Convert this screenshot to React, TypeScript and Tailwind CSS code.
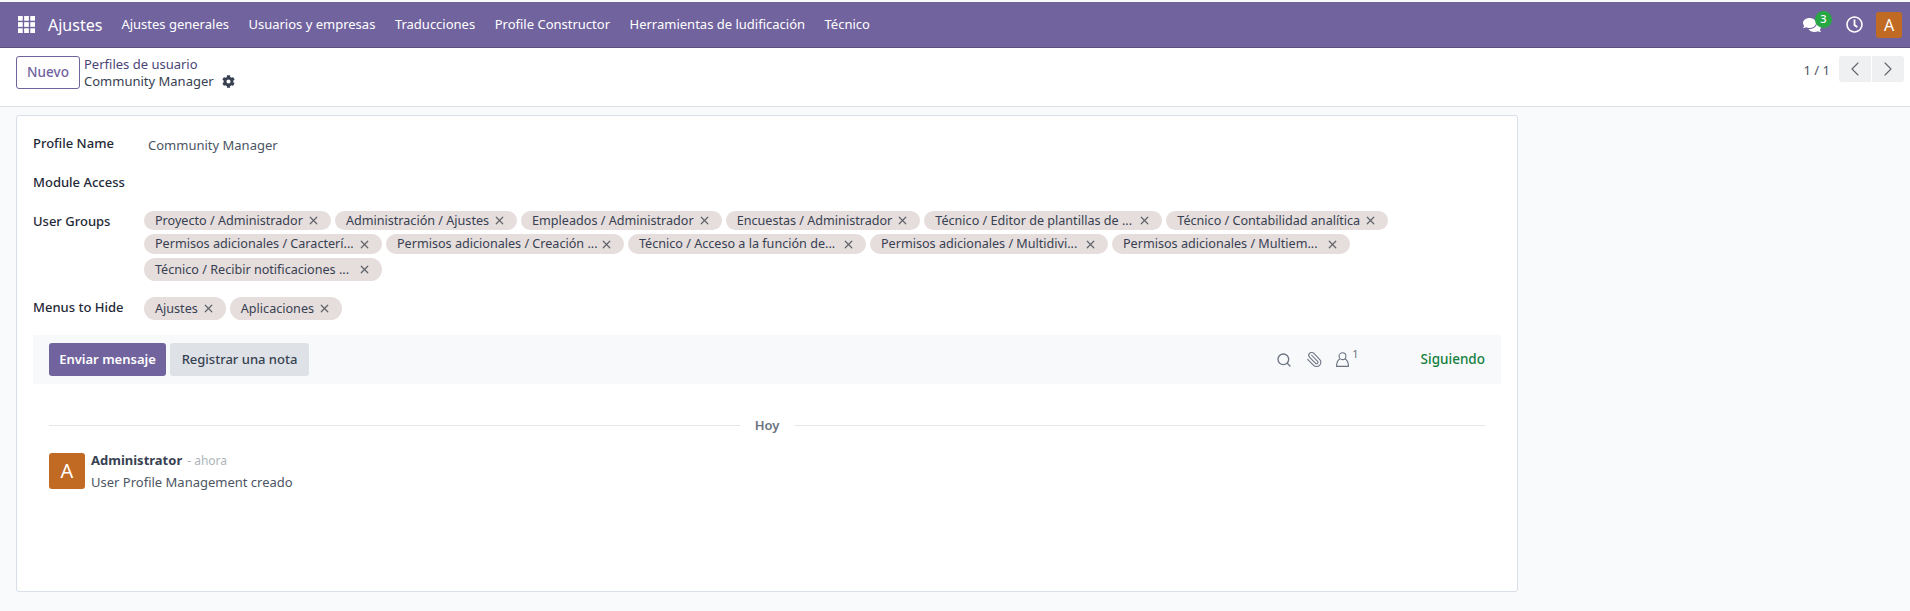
import { FaCog, FaComments, FaRegClock } from "react-icons/fa";
import { ChevronLeft, ChevronRight, Paperclip, Search, X } from "lucide-react";

const menus = ["Ajustes generales", "Usuarios y empresas", "Traducciones", "Profile Constructor", "Herramientas de ludificación", "Técnico"];

const groupRows = [
    { height: "h-[19px]", tags: ["Proyecto / Administrador", "Administración / Ajustes", "Empleados / Administrador", "Encuestas / Administrador", "Técnico / Editor de plantillas de ...", "Técnico / Contabilidad analítica"] },
    { height: "h-[20px]", tags: ["Permisos adicionales / Caracterí...", "Permisos adicionales / Creación ...", "Técnico / Acceso a la función de...", "Permisos adicionales / Multidivi...", "Permisos adicionales / Multiem..."] },
    { height: "h-[23px]", tags: ["Técnico / Recibir notificaciones ..."] },
];

function Tag({ label, height }: { label: string; height: string }) {
    // cut-off labels sit in pills of one fixed width
    const width = label.endsWith("...") ? "w-[238px] justify-between" : "gap-[4px]";
    return (
        <span className={`${height} ${width} flex items-center rounded-full bg-[#e6dddd] pl-[11px] pr-[11px] pt-[1px] text-[12.6px] text-[#374151] overflow-hidden`}>
            <span className="whitespace-nowrap">{label}</span>
            <X size={13} strokeWidth={2.2} className="text-[#5f636a] -mt-[1px]" />
        </span>
    );
}

function AppsIcon() {
    return (
        <svg width="17" height="17" viewBox="0 0 18 18" fill="#fff">
            <rect x="0" y="0" width="5" height="5" />
            <rect x="6.5" y="0" width="5" height="5" />
            <rect x="13" y="0" width="5" height="5" />
            <rect x="0" y="6.5" width="5" height="5" />
            <rect x="6.5" y="6.5" width="5" height="5" />
            <rect x="13" y="6.5" width="5" height="5" />
            <rect x="0" y="13" width="5" height="5" />
            <rect x="6.5" y="13" width="5" height="5" />
            <rect x="13" y="13" width="5" height="5" />
        </svg>
    );
}

function FollowerIcon() {
    return (
        <svg width="13" height="15" viewBox="0 0 13 15" fill="none" stroke="currentColor" strokeWidth="1.1">
            <circle cx="6.5" cy="4.2" r="3.4" />
            <path d="M3.8 7C1.8 8 .6 10 .6 14.4H12.4C12.4 10 11.2 8 9.2 7" />
        </svg>
    );
}

export default function App() {
    return (
        <div className="w-[1910px] h-[611px] overflow-hidden flex flex-col bg-[#f9fafb] font-['Noto_Sans',sans-serif] text-[13px] text-[#374151]">
            {/* Top nav */}
            <div className="mt-[2px] h-[46px] shrink-0 flex items-center bg-[#71639e] border-b border-[#5b4f80] text-white">
                <div className="ml-[18px]"><AppsIcon /></div>
                <span className="ml-[13px] text-[16px]">Ajustes</span>
                <div className="ml-[19px] flex gap-[19.5px] text-[13px]">
                    {menus.map((m) => (
                        <span key={m} className="whitespace-nowrap">{m}</span>
                    ))}
                </div>
                <div className="ml-auto flex items-center mr-[8px]">
                    <div className="relative">
                        <FaComments size={18} />
                        <span className="absolute -top-[5px] left-[12px] w-[17px] h-[17px] rounded-full bg-[#28a745] text-[11px] font-medium flex items-center justify-center">3</span>
                    </div>
                    <FaRegClock size={17} className="ml-[25px]" />
                    <span className="ml-[13px] w-[26px] h-[26px] rounded-[3px] bg-[#c06a24] text-[16px] flex items-center justify-center">A</span>
                </div>
            </div>

            {/* Control panel */}
            <div className="h-[59px] shrink-0 flex bg-white border-b border-[#dee2e6] pl-[16px] pr-[6px] pt-[8px]">
                <button className="w-[64px] h-[33px] rounded-[3px] border border-[#71639e] text-[#71639e] text-[13.5px] font-medium">Nuevo</button>
                <div className="ml-[4px] flex flex-col text-[#4b4577]">
                    <span className="leading-[17px]">Perfiles de usuario</span>
                    <span className="leading-[17px] flex items-center gap-[8px] text-[#374151]">
                        Community Manager <FaCog size={13} />
                    </span>
                </div>
                <div className="ml-auto flex items-start">
                    <span className="mt-[5px] mr-[9px] text-[#4b5563]">1 / 1</span>
                    <div className="flex gap-px">
                        <span className="w-[32px] h-[26px] rounded-l-[3px] bg-[#eef0f2] flex items-center justify-center"><ChevronLeft size={24} strokeWidth={1.1} className="text-[#5f636a]" /></span>
                        <span className="w-[32px] h-[26px] rounded-r-[3px] bg-[#eef0f2] flex items-center justify-center"><ChevronRight size={24} strokeWidth={1.1} className="text-[#5f636a]" /></span>
                    </div>
                </div>
            </div>

            {/* Form sheet */}
            <div className="mt-[8px] ml-[16px] w-[1502px] h-[477px] shrink-0 flex flex-col bg-white border border-[#d8dfe8] rounded-[3px] px-[16px] pt-[17px]">
                <div className="flex h-[39px] font-medium text-[#1f2937]">
                    <span className="w-[115px] mt-[1px]">Profile Name</span>
                    <span className="mt-[3px] font-normal text-[#4b5563]">Community Manager</span>
                </div>
                <div className="h-[39px] pt-[1px] font-medium text-[#1f2937]">Module Access</div>
                <div className="flex">
                    <span className="w-[111px] mt-[1px] font-medium text-[#1f2937]">User Groups</span>
                    <div className="flex flex-col gap-[4px]">
                        {groupRows.map((row, i) => (
                            <div key={i} className="flex gap-[4px]">
                                {row.tags.map((t) => (
                                    <Tag key={t} label={t} height={row.height} />
                                ))}
                            </div>
                        ))}
                    </div>
                </div>
                <div className="flex mt-[16px]">
                    <span className="w-[111px] mt-[1px] font-medium text-[#1f2937]">Menus to Hide</span>
                    <div className="flex gap-[4px]">
                        <Tag label="Ajustes" height="h-[23px]" />
                        <Tag label="Aplicaciones" height="h-[23px]" />
                    </div>
                </div>

                {/* Chatter */}
                <div className="mt-[15px] h-[49px] flex items-center bg-[#f8f9fb] pl-[16px] pr-[16px]">
                    <button className="w-[117px] h-[33px] rounded-[3px] bg-[#71639e] text-white font-semibold">Enviar mensaje</button>
                    <button className="ml-[4px] w-[139px] h-[33px] rounded-[3px] bg-[#dee2e6] text-[#374151] font-medium">Registrar una nota</button>
                    <div className="ml-auto flex items-center text-[#6b7280]">
                        <Search size={16} strokeWidth={2} />
                        <Paperclip size={17} strokeWidth={1.5} className="ml-[14px] -scale-x-100" />
                        <span className="ml-[13px]"><FollowerIcon /></span>
                        <span className="ml-[3px] -mt-[10px] text-[11px]">1</span>
                        <span className="ml-[62px] text-[13.5px] font-medium text-[#13803d]">Siguiendo</span>
                    </div>
                </div>

                <div className="mt-[32px] mx-[16px] flex items-center gap-[15px]">
                    <div className="flex-1 h-px bg-[#e5e7eb]" />
                    <span className="font-semibold text-[#6b7280]">Hoy</span>
                    <div className="flex-1 h-px bg-[#e5e7eb]" />
                </div>

                <div className="mt-[17px] mx-[16px] flex gap-[6px]">
                    <span className="w-[36px] h-[36px] rounded-[3px] bg-[#c06a24] text-white text-[20px] flex items-center justify-center">A</span>
                    <div className="flex flex-col">
                        <span className="leading-[17px] -mt-[1px]">
                            <span className="font-bold text-[#374151]">Administrator</span>
                            <span className="ml-[5px] text-[12px] text-[#adb5bd]">- ahora</span>
                        </span>
                        <span className="mt-[5px] leading-[17px] text-[#4b5563]">User Profile Management creado</span>
                    </div>
                </div>
            </div>
        </div>
    );
}
